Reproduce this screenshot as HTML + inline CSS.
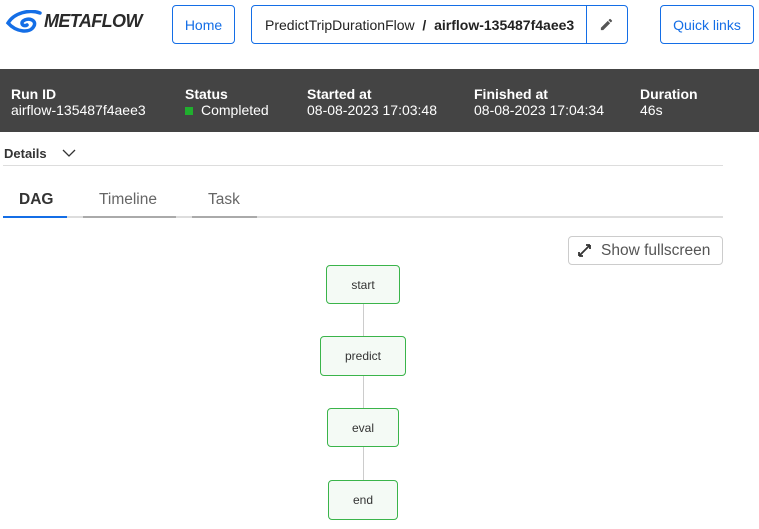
<!DOCTYPE html>
<html><head><style>
*{box-sizing:border-box;margin:0;padding:0}
body{width:759px;height:529px;overflow:hidden;background:#fff;font-family:"Liberation Sans",sans-serif;position:relative;color:#333}
.abs{position:absolute}
.btn{position:absolute;border:1px solid #146ee6;border-radius:4px;color:#146ee6;font-size:14px;display:flex;align-items:center;justify-content:center}
.bar{position:absolute;left:0;top:69px;width:759px;height:63px;background:#444;color:#fff;font-size:14px}
.bar div{position:absolute;top:17px;line-height:16px}
.bar b{font-weight:bold;display:block}
.node{position:absolute;border:1px solid #3ab44a;border-radius:4px;background:#f4faf5;font-size:12px;color:#333;display:flex;align-items:center;justify-content:center}
.tab{position:absolute;top:190px;font-size:15.5px;color:#666}
</style></head><body>
<svg class="abs" style="left:4px;top:10px" width="38" height="26" viewBox="0 0 38 26"><path d="M36 3 C25 -1 10 3 4 13 C12 22 26 24 30 16 C33 10 24 7 19 11 C16 14 20 17 23 15" fill="none" stroke="#146ee6" stroke-width="3.5" stroke-linecap="round"/></svg>
<div class="abs" style="left:44px;top:11px;font-size:18px;font-weight:bold;font-style:italic;color:#2a2a2a;letter-spacing:-0.6px">METAFLOW</div>
<div class="btn" style="left:172px;top:5px;width:63px;height:39px">Home</div>
<div class="btn" style="left:251px;top:5px;width:377px;height:39px;color:#222;justify-content:flex-start;padding-left:13px">PredictTripDurationFlow&nbsp;&nbsp;<b>/&nbsp;&nbsp;airflow-135487f4aee3</b>
<div class="abs" style="left:334px;top:0;width:1px;height:37px;background:#146ee6"></div>
<svg class="abs" style="left:347px;top:11px" width="15" height="15" viewBox="0 0 24 24"><path d="M3 17.25V21h3.75L17.8 9.94l-3.75-3.75L3 17.25zM20.7 7.04a1 1 0 000-1.41l-2.34-2.34a1 1 0 00-1.41 0l-1.83 1.83 3.75 3.75 1.83-1.83z" fill="#555"/></svg></div>
<div class="btn" style="left:660px;top:5px;width:94px;height:39px">Quick links</div>
<div class="bar">
<div style="left:11px"><b>Run ID</b>airflow-135487f4aee3</div>
<div style="left:185px"><b>Status</b><span style="display:inline-block;width:8px;height:8px;background:#20af2e;margin-right:8px"></span>Completed</div>
<div style="left:307px"><b>Started at</b>08-08-2023 17:03:48</div>
<div style="left:474px"><b>Finished at</b>08-08-2023 17:04:34</div>
<div style="left:640px"><b>Duration</b>46s</div>
</div>
<div class="abs" style="left:4px;top:146px;font-size:13px;font-weight:bold;color:#333">Details</div>
<svg class="abs" style="left:62px;top:149px" width="14" height="9" viewBox="0 0 14 9"><path d="M1 1l6 6 6-6" fill="none" stroke="#333" stroke-width="1.3"/></svg>
<div class="abs" style="left:3px;top:165px;width:720px;height:1px;background:#ddd"></div>
<div class="tab" style="left:19px;top:191px;color:#333;font-weight:bold">DAG</div>
<div class="tab" style="left:99px;top:191px">Timeline</div>
<div class="tab" style="left:208px;top:191px">Task</div>
<div class="abs" style="left:3px;top:216px;width:720px;height:2px;background:#ddd"></div>
<div class="abs" style="left:3px;top:216px;width:64px;height:2px;background:#146ee6"></div>
<div class="abs" style="left:83px;top:216px;width:93px;height:2px;background:#aaa"></div>
<div class="abs" style="left:192px;top:216px;width:65px;height:2px;background:#aaa"></div>
<div class="abs" style="left:568px;top:236px;width:155px;height:29px;border:1px solid #ccc;border-radius:4px;font-size:15.5px;color:#555;padding:5px 0 0 32px">Show fullscreen</div>
<svg class="abs" style="left:577px;top:243px" width="15" height="15" viewBox="0 0 15 15"><path d="M2 13L13 2M2 13h4M2 13V9M13 2H9M13 2v4" fill="none" stroke="#333" stroke-width="1.8"/></svg>
<div class="abs" style="left:363px;top:303px;width:1px;height:180px;background:#ccc"></div>
<div class="node" style="left:326px;top:265px;width:74px;height:39px">start</div>
<div class="node" style="left:320px;top:336px;width:86px;height:40px">predict</div>
<div class="node" style="left:327px;top:408px;width:72px;height:39px">eval</div>
<div class="node" style="left:328px;top:480px;width:70px;height:40px">end</div>
</body></html>
